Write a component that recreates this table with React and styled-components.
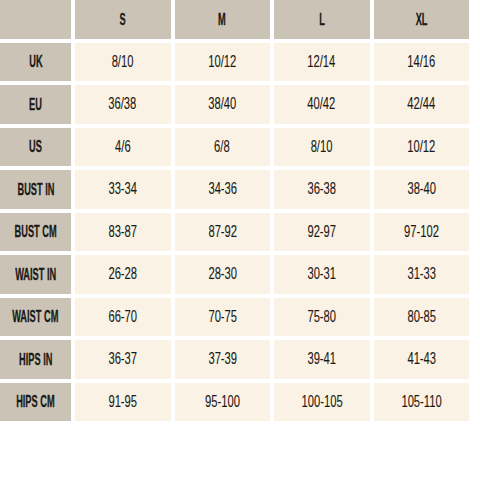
import styled, { createGlobalStyle } from 'styled-components'

const GlobalStyle = createGlobalStyle`
  html, body {
    margin: 0;
    padding: 0;
    background: #ffffff;
  }
`;

const Chart = styled.div`
  display: grid;
  grid-template-columns: 71px repeat(4, 95.5px);
  grid-template-rows: repeat(10, 38.5px);
  gap: 4px;
  width: 480px;
  height: 480px;
  background: #ffffff;
`;

const Cell = styled.div`
  display: flex;
  align-items: center;
  justify-content: center;
  background: ${p => (p.$head ? '#cbc4b6' : '#faf2e4')};
  color: #1a1917;
  font-family: "Liberation Sans", Arial, sans-serif;
  font-size: ${p => (p.$head ? '16.5px' : '17px')};
  font-weight: ${p => (p.$head ? 700 : 400)};
  overflow: hidden;
`;

const Label = styled.span`
  display: inline-block;
  white-space: nowrap;
  transform: scaleX(${p => (p.$head ? 0.56 : 0.66)});
  -webkit-text-stroke: ${p => (p.$head ? '0.3px' : '0.1px')} #1a1917;
`;

const sizes = ['S', 'M', 'L', 'XL']

const rows = [
  ['UK', '8/10', '10/12', '12/14', '14/16'],
  ['EU', '36/38', '38/40', '40/42', '42/44'],
  ['US', '4/6', '6/8', '8/10', '10/12'],
  ['BUST IN', '33-34', '34-36', '36-38', '38-40'],
  ['BUST CM', '83-87', '87-92', '92-97', '97-102'],
  ['WAIST IN', '26-28', '28-30', '30-31', '31-33'],
  ['WAIST CM', '66-70', '70-75', '75-80', '80-85'],
  ['HIPS IN', '36-37', '37-39', '39-41', '41-43'],
  ['HIPS CM', '91-95', '95-100', '100-105', '105-110'],
]

const App = () => {
  return (
    <>
      <GlobalStyle />
      <Chart>
        <Cell $head />
        {sizes.map(s => (
          <Cell $head key={s}><Label $head>{s}</Label></Cell>
        ))}
        {rows.map(([name, ...vals]) => [
          <Cell $head key={name}><Label $head>{name}</Label></Cell>,
          ...vals.map((v, i) => (
            <Cell key={name + i}><Label>{v}</Label></Cell>
          )),
        ])}
      </Chart>
    </>
  )
}

export default App
